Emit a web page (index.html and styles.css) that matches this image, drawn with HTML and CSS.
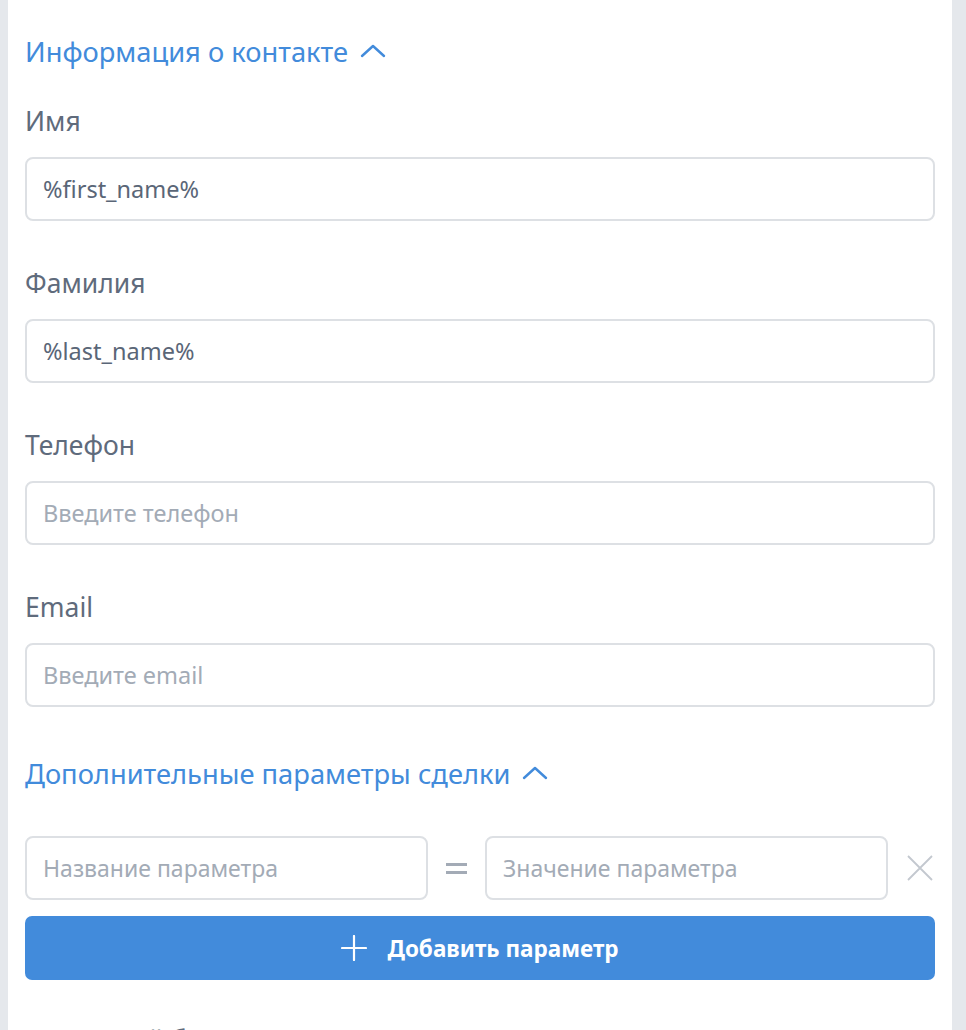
FILE: index.html
```html
<!DOCTYPE html>
<html lang="ru">
<head>
<meta charset="utf-8">
<link rel="stylesheet" href="styles.css">
</head>
<body>
<div class="card">
  <div class="section-title">
    <span>Информация о контакте</span>
    <svg class="chev" width="26" height="14" viewBox="0 0 26 14"><path d="M2 12 L13 2 L24 12" fill="none" stroke="#428bdb" stroke-width="2.4" stroke-linecap="round" stroke-linejoin="round"/></svg>
  </div>

  <div class="field">
    <div class="label">Имя</div>
    <div class="input">%first_name%</div>
  </div>
  <div class="field">
    <div class="label">Фамилия</div>
    <div class="input">%last_name%</div>
  </div>
  <div class="field">
    <div class="label">Телефон</div>
    <div class="input placeholder">Введите телефон</div>
  </div>
  <div class="field">
    <div class="label">Email</div>
    <div class="input placeholder">Введите email</div>
  </div>

  <div class="section-title second">
    <span>Дополнительные параметры сделки</span>
    <svg class="chev" width="26" height="14" viewBox="0 0 26 14"><path d="M2 12 L13 2 L24 12" fill="none" stroke="#428bdb" stroke-width="2.4" stroke-linecap="round" stroke-linejoin="round"/></svg>
  </div>

  <div class="param-row">
    <div class="input placeholder small">Название параметра</div>
    <div class="eq"><span></span><span></span></div>
    <div class="input placeholder small">Значение параметра</div>
    <svg class="close" width="26" height="26" viewBox="0 0 26 26"><path d="M1 1 L25 25 M25 1 L1 25" stroke="#c3c8cf" stroke-width="1.8" fill="none"/></svg>
  </div>

  <button class="add-btn">
    <svg width="26" height="26" viewBox="0 0 26 26"><path d="M13 1 V25 M1 13 H25" stroke="#ffffff" stroke-width="2.2" stroke-linecap="round" fill="none"/></svg>
    <span>Добавить параметр</span>
  </button>

  <div class="label last">Стартовый блок</div>
</div>
</body>
</html>
```

FILE: styles.css
```css
html, body {
  margin: 0;
  padding: 0;
  background: #e5e8ec;
  height: 100%;
  overflow: hidden;
}

body {
  font-family: "Noto Sans", "Open Sans", sans-serif;
}

.card {
  margin-left: 8px;
  width: 944px;
  min-height: 1030px;
  background: #ffffff;
  box-sizing: border-box;
  padding: 34px 17px 0 17px;
}

.section-title {
  display: flex;
  align-items: center;
  gap: 12px;
  height: 36px;
  color: #428bdb;
  font-size: 27.3px;
  line-height: 36px;
}

.section-title .chev {
  margin-top: -3px;
}

.section-title.second {
  margin-top: 49px;
  margin-bottom: 44px;
}

.field {
  display: flex;
  flex-direction: column;
}

.label {
  color: #5f6b7c;
  font-size: 26.5px;
  line-height: 32px;
  height: 32px;
  margin-top: 35px;
  margin-bottom: 20px;
}

.field + .field .label {
  margin-top: 46px;
}

.input {
  height: 64px;
  box-sizing: border-box;
  border: 2px solid #dde0e4;
  border-radius: 8px;
  padding: 0 16px;
  display: flex;
  align-items: center;
  font-size: 23.5px;
  color: #5a6677;
  background: #fff;
}

.input.placeholder {
  color: #a3abb6;
}

.input.small {
  font-size: 23px;
}

.param-row {
  display: flex;
  align-items: center;
  height: 64px;
}

.param-row .input {
  width: 403px;
  flex: none;
}

.eq {
  width: 57px;
  display: flex;
  flex-direction: column;
  align-items: center;
  gap: 5px;
}

.eq span {
  display: block;
  width: 21px;
  height: 3px;
  background: #a3abb6;
}

.close {
  margin-left: 19px;
}

.add-btn {
  margin-top: 16px;
  width: 100%;
  height: 64px;
  border: none;
  border-radius: 7px;
  background: #428bdb;
  color: #ffffff;
  font-family: "Noto Sans", "Open Sans", sans-serif;
  font-weight: 700;
  font-size: 22.5px;
  display: flex;
  align-items: center;
  justify-content: center;
  gap: 20px;
  padding: 0;
}

.label.last {
  margin-top: 44px;
}
```
